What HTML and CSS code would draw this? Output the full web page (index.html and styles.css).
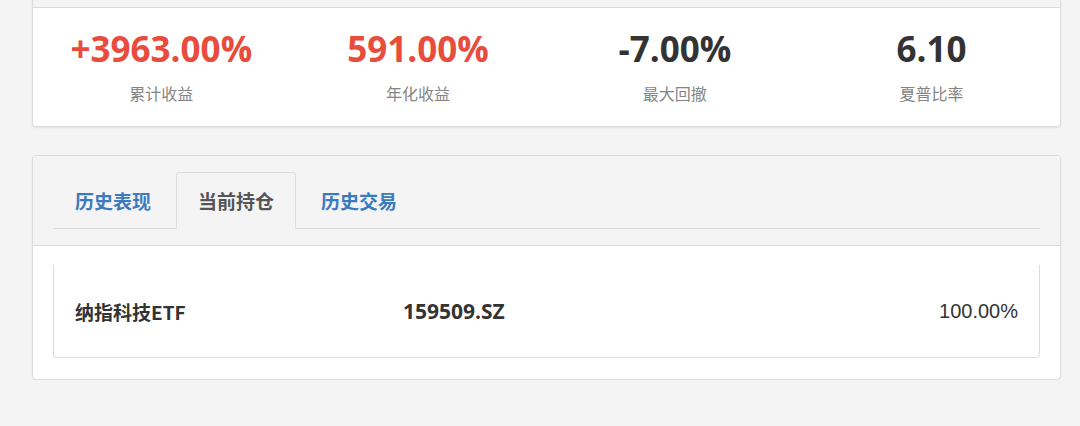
FILE: index.html
```html
<!DOCTYPE html>
<html lang="zh-CN">
<head>
<meta charset="utf-8">
<title>回测结果</title>
<link rel="stylesheet" href="styles.css">
</head>
<body>
<div class="page">
  <section class="card stats-card">
    <div class="card-head-strip"></div>
    <div class="stats">
      <div class="stat">
        <div class="stat-value up">+3963.00%</div>
        <div class="stat-label">累计收益</div>
      </div>
      <div class="stat">
        <div class="stat-value up">591.00%</div>
        <div class="stat-label">年化收益</div>
      </div>
      <div class="stat">
        <div class="stat-value">-7.00%</div>
        <div class="stat-label">最大回撤</div>
      </div>
      <div class="stat">
        <div class="stat-value">6.10</div>
        <div class="stat-label">夏普比率</div>
      </div>
    </div>
  </section>

  <section class="card tabs-card">
    <div class="tabs-head">
      <ul class="tabs">
        <li class="tab">历史表现</li>
        <li class="tab active">当前持仓</li>
        <li class="tab">历史交易</li>
      </ul>
    </div>
    <div class="tabs-body">
      <div class="holdings">
        <div class="holding-row">
          <span class="h-name">纳指科技ETF</span>
          <span class="h-code">159509.SZ</span>
          <span class="h-pct">100.00%</span>
        </div>
      </div>
    </div>
  </section>
</div>
</body>
</html>
```

FILE: styles.css
```css
* { box-sizing: border-box; }
html, body {
  margin: 0;
  padding: 0;
  background: #f4f4f4;
  font-family: "Open Sans", "Noto Sans CJK SC", sans-serif;
  color: #333;
}
.page {
  width: 1061px;
  padding-left: 32px;
}
.card {
  background: #fff;
  border: 1px solid #dcdcdc;
  border-radius: 4px;
  box-shadow: 0 1px 2px rgba(0,0,0,0.08);
  overflow: hidden;
}
.stats-card {
  border-top: 0;
  border-radius: 0 0 4px 4px;
}
.card-head-strip {
  height: 8px;
  background: #f4f4f4;
  border-bottom: 1px solid #dcdcdc;
}
.stats {
  display: grid;
  grid-template-columns: repeat(4, 1fr);
  padding: 21px 0 22px;
}
.stat {
  display: flex;
  flex-direction: column;
  align-items: center;
}
.stat-value {
  font-family: "Open Sans", "Noto Sans CJK SC", sans-serif;
  font-weight: 700;
  font-size: 35px;
  line-height: 40px;
  color: #333;
}
.stat-value.up { color: #e84c3d; }
.stat-label {
  margin-top: 13px;
  font-family: "Noto Sans CJK SC", sans-serif;
  font-size: 16px;
  line-height: 22px;
  color: #858585;
}
.tabs-card {
  margin-top: 28px;
}
.tabs-head {
  background: #f4f4f4;
  border-bottom: 1px solid #dcdcdc;
  padding: 16px 20px 16px;
}
.tabs {
  list-style: none;
  margin: 0;
  padding: 0;
  display: flex;
  border-bottom: 1px solid #dcdcdc;
}
.tab {
  height: 57px;
  margin-bottom: -1px;
  margin-right: 3px;
  padding: 0 21px;
  border: 1px solid transparent;
  border-radius: 4px 4px 0 0;
  display: flex;
  align-items: center;
  font-family: "Noto Sans CJK SC", sans-serif;
  font-weight: 700;
  font-size: 19px;
  color: #3a7bbf;
}
.tab.active {
  color: #555;
  background: #f4f4f4;
  border-color: #dcdcdc;
  border-bottom-color: #f4f4f4;
}
.tabs-body {
  padding: 19px 20px 21px;
}
.holdings {
  height: 93px;
  border: 1px solid #dcdcdc;
  border-top: 0;
  border-radius: 0 0 4px 4px;
  padding: 0 21px;
  display: flex;
  align-items: center;
}
.holding-row {
  flex: 1;
  display: grid;
  grid-template-columns: 328px 1fr auto;
  align-items: center;
}
.h-name, .h-code {
  font-family: "Open Sans", "Noto Sans CJK SC", sans-serif;
  font-weight: 700;
  font-size: 19px;
  color: #333;
}
.h-name { font-family: "Noto Sans CJK SC", sans-serif; }
.h-code { font-size: 21px; }
.h-pct {
  font-family: "Liberation Sans", Arial, sans-serif;
  font-size: 20px;
  color: #333;
}
```
